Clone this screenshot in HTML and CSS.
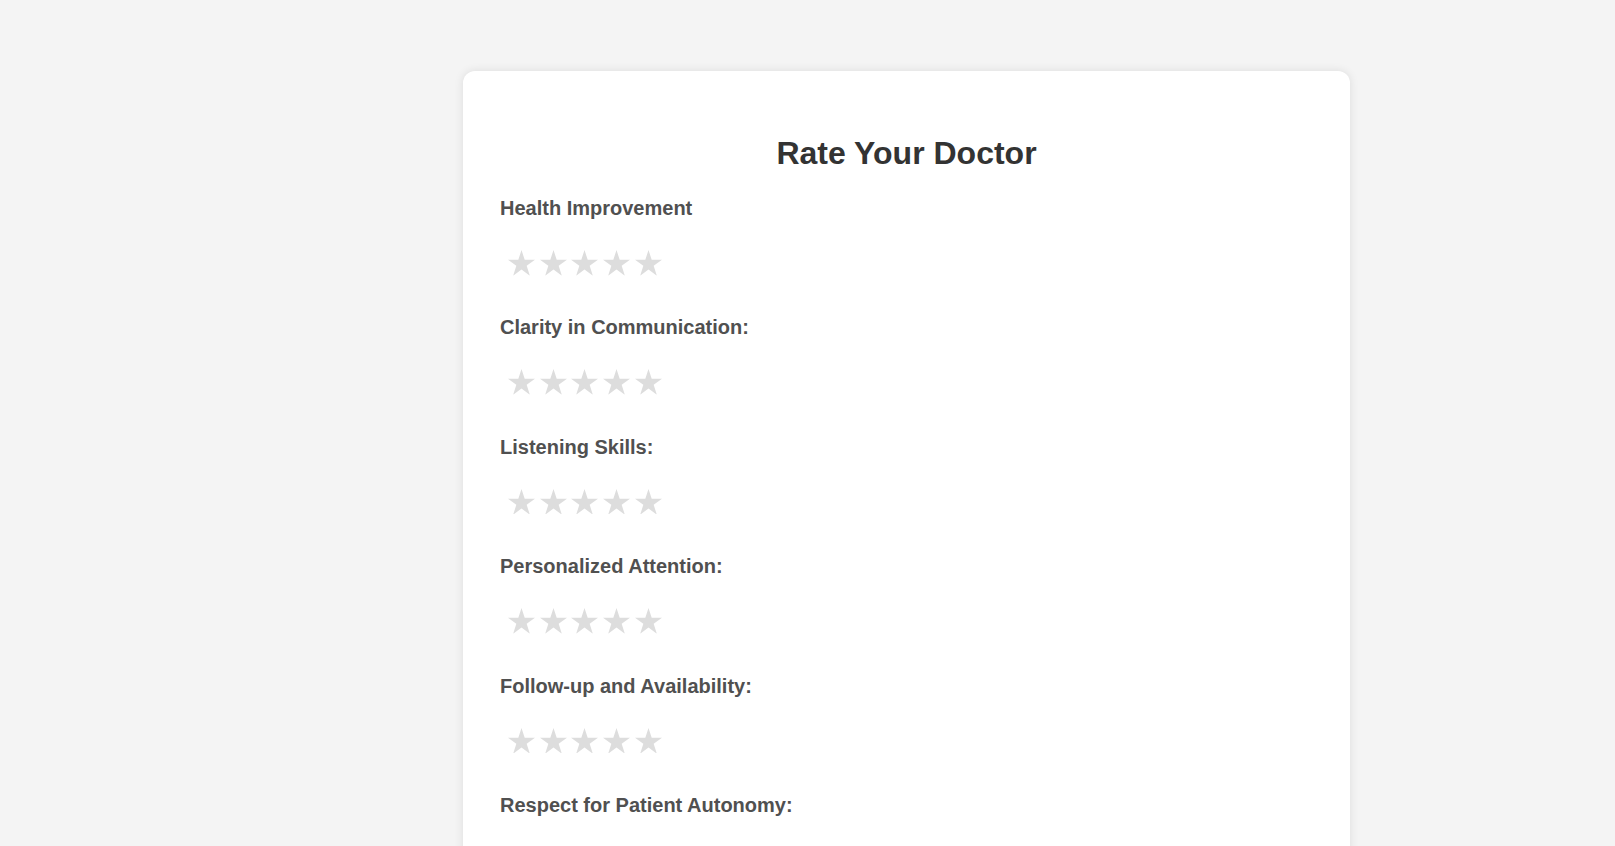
FILE: index.html
```html
<!DOCTYPE html>
<html lang="en">
<head>
<meta charset="utf-8">
<title>Rate Your Doctor</title>
<link rel="stylesheet" href="styles.css">
</head>
<body>
<svg width="0" height="0" class="defs" aria-hidden="true">
  <symbol id="star" viewBox="0.489 0 19.022 18.09">
    <polygon points="10,0 12.245,6.91 19.511,6.91 13.633,11.18 15.878,18.09 10,13.82 4.122,18.09 6.367,11.18 0.489,6.91 7.755,6.91"/>
  </symbol>
</svg>
<main class="page">
  <form class="card">
    <h2 class="title">Rate Your Doctor</h2>

    <div class="field">
      <label class="label">Health Improvement</label>
      <div class="stars">
        <svg class="star"><use href="#star"/></svg><svg class="star"><use href="#star"/></svg><svg class="star"><use href="#star"/></svg><svg class="star"><use href="#star"/></svg><svg class="star"><use href="#star"/></svg>
      </div>
    </div>

    <div class="field">
      <label class="label">Clarity in Communication:</label>
      <div class="stars">
        <svg class="star"><use href="#star"/></svg><svg class="star"><use href="#star"/></svg><svg class="star"><use href="#star"/></svg><svg class="star"><use href="#star"/></svg><svg class="star"><use href="#star"/></svg>
      </div>
    </div>

    <div class="field">
      <label class="label">Listening Skills:</label>
      <div class="stars">
        <svg class="star"><use href="#star"/></svg><svg class="star"><use href="#star"/></svg><svg class="star"><use href="#star"/></svg><svg class="star"><use href="#star"/></svg><svg class="star"><use href="#star"/></svg>
      </div>
    </div>

    <div class="field">
      <label class="label">Personalized Attention:</label>
      <div class="stars">
        <svg class="star"><use href="#star"/></svg><svg class="star"><use href="#star"/></svg><svg class="star"><use href="#star"/></svg><svg class="star"><use href="#star"/></svg><svg class="star"><use href="#star"/></svg>
      </div>
    </div>

    <div class="field">
      <label class="label">Follow-up and Availability:</label>
      <div class="stars">
        <svg class="star"><use href="#star"/></svg><svg class="star"><use href="#star"/></svg><svg class="star"><use href="#star"/></svg><svg class="star"><use href="#star"/></svg><svg class="star"><use href="#star"/></svg>
      </div>
    </div>

    <div class="field">
      <label class="label">Respect for Patient Autonomy:</label>
      <div class="stars">
        <svg class="star"><use href="#star"/></svg><svg class="star"><use href="#star"/></svg><svg class="star"><use href="#star"/></svg><svg class="star"><use href="#star"/></svg><svg class="star"><use href="#star"/></svg>
      </div>
    </div>
  </form>
</main>
</body>
</html>
```
FILE: styles.css
```css
html, body {
  margin: 0;
  padding: 0;
}
body {
  background: #f4f4f4;
  font-family: "Liberation Sans", Arial, sans-serif;
}
.defs {
  position: absolute;
  width: 0;
  height: 0;
  overflow: hidden;
}
.page {
  padding: 71px 0 40px 463px;
}
.card {
  box-sizing: border-box;
  width: 887px;
  background: #fff;
  border-radius: 12px;
  box-shadow: 0 0 10px rgba(0, 0, 0, 0.1);
  padding: 64px 37px 40px;
}
.title {
  margin: 0 0 26px;
  text-align: center;
  font-size: 32px;
  line-height: 36px;
  font-weight: bold;
  color: #333;
}
.field {
  margin-bottom: 40.4px;
}
.label {
  display: block;
  font-size: 20px;
  line-height: 23px;
  font-weight: bold;
  color: #505050;
}
.stars {
  display: flex;
  gap: 4.7px;
  margin-top: 30px;
  padding-left: 8px;
  height: 26px;
}
.star {
  width: 27px;
  height: 25.7px;
  fill: #ddd;
}
```
